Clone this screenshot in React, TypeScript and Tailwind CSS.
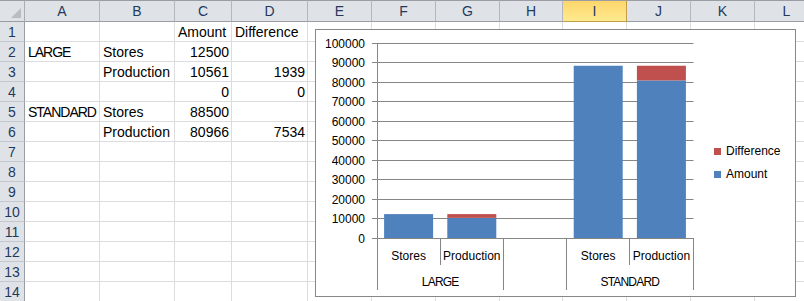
import React from "react";

const colW = [
  "w-[75px]",
  "w-[75px]",
  "w-[57px]",
  "w-[76px]",
  "w-[64px]",
  "w-[64px]",
  "w-[64px]",
  "w-[63px]",
  "w-[64px]",
  "w-[64px]",
  "w-[64px]",
  "w-[64px]",
];
const letters = ["A", "B", "C", "D", "E", "F", "G", "H", "I", "J", "K", "L"];

type Cell = { t: string; r?: boolean; caps?: boolean };
const data: Record<number, Record<number, Cell>> = {
  1: { 2: { t: "Amount" }, 3: { t: "Difference" } },
  2: { 0: { t: "LARGE", caps: true }, 1: { t: "Stores" }, 2: { t: "12500", r: true } },
  3: { 1: { t: "Production" }, 2: { t: "10561", r: true }, 3: { t: "1939", r: true } },
  4: { 2: { t: "0", r: true }, 3: { t: "0", r: true } },
  5: { 0: { t: "STANDARD", caps: true }, 1: { t: "Stores" }, 2: { t: "88500", r: true } },
  6: { 1: { t: "Production" }, 2: { t: "80966", r: true }, 3: { t: "7534", r: true } },
};

const rows = Array.from({ length: 14 }, (_, i) => i + 1);

const Y0 = 238.5;
const UNIT = 19.52;
const yv = (v: number) => Y0 - (v / 10000) * UNIT;
const slotX = (i: number) => 377 + i * 63.2;
const BW = 49;

function Chart() {
  const grid = Array.from({ length: 11 }, (_, i) => i);
  const bars = [
    { slot: 0, amount: 12500, diff: 0 },
    { slot: 1, amount: 10561, diff: 1939 },
    { slot: 3, amount: 88500, diff: 0 },
    { slot: 4, amount: 80966, diff: 7534 },
  ];
  const font = "'Liberation Sans', Arial, sans-serif";
  return (
    <svg
      className="absolute left-[315px] top-[29px]"
      width={482}
      height={269}
      viewBox="315 29 482 269"
      style={{ fontFamily: font }}
    >
      <rect x={315.5} y={29.5} width={480} height={267} fill="#ffffff" stroke="#878787" strokeWidth={1} />
      {grid.map((i) => {
        const y = Math.floor(Y0 - i * UNIT) + 0.5;
        return (
          <g key={i}>
            <line x1={372} x2={693.5} y1={y} y2={y} stroke="#868686" strokeWidth={1} />
            <text x={365} y={y + 4.5} fontSize={12} textAnchor="end" fill="#000">
              {i * 10000}
            </text>
          </g>
        );
      })}
      {bars.map((b) => {
        const cx = slotX(b.slot) + 31.6;
        const x = cx - BW / 2;
        const ya = yv(b.amount);
        const yd = yv(b.amount + b.diff);
        return (
          <g key={b.slot}>
            <rect x={x} y={ya} width={BW} height={Y0 - ya} fill="#4f81bd" />
            {b.diff > 0 && <rect x={x} y={yd} width={BW} height={ya - yd} fill="#c0504d" />}
          </g>
        );
      })}
      <line x1={377.5} x2={377.5} y1={43} y2={290} stroke="#868686" strokeWidth={1} />
      <line x1={372} x2={693.5} y1={238.5} y2={238.5} stroke="#868686" strokeWidth={1} />
      {[1, 4].map((i) => {
        const x = Math.floor(slotX(i)) + 0.5;
        return <line key={i} x1={x} x2={x} y1={238} y2={265} stroke="#868686" strokeWidth={1} />;
      })}
      {[2, 3, 5].map((i) => {
        const x = Math.floor(slotX(i)) + 0.5;
        return <line key={i} x1={x} x2={x} y1={238} y2={290} stroke="#868686" strokeWidth={1} />;
      })}
      {[
        { s: 0, t: "Stores" },
        { s: 1, t: "Production" },
        { s: 3, t: "Stores" },
        { s: 4, t: "Production" },
      ].map((c) => (
        <text key={c.s} x={slotX(c.s) + 31.6} y={260} fontSize={12} textAnchor="middle" fill="#000">
          {c.t}
        </text>
      ))}
      <text x={(377 + slotX(2)) / 2} y={286} fontSize={12} textAnchor="middle" fill="#000" letterSpacing={-0.8}>
        LARGE
      </text>
      <text x={(slotX(3) + slotX(5)) / 2} y={286} fontSize={12} textAnchor="middle" fill="#000" letterSpacing={-0.8}>
        STANDARD
      </text>
      <rect x={714} y={148} width={7} height={7} fill="#c0504d" />
      <text x={726} y={155} fontSize={12} fill="#000">
        Difference
      </text>
      <rect x={714} y={171} width={7} height={7} fill="#4f81bd" />
      <text x={726} y={178} fontSize={12} fill="#000">
        Amount
      </text>
    </svg>
  );
}

export default function App() {
  return (
    <div className="relative w-[804px] h-[301px] overflow-hidden bg-white font-['Liberation_Sans',Arial,sans-serif] text-[14px] text-black">
      <div className="flex w-max flex-col">
        {/* header row */}
        <div className="flex h-[22px]">
          <div className="relative h-[22px] w-[25px] shrink-0 border-y border-r border-y-[#9a9ea4] border-r-[#a9aeb4] bg-[#dfe3e8]">
            <svg className="absolute left-0 top-0" width={24} height={20}>
              <polygon points="21,7 21,17 11,17" fill="#b9bcc0" />
            </svg>
          </div>
          {letters.map((l, i) => {
            const sel = l === "I";
            return (
              <div
                key={l}
                className={
                  sel
                    ? `${colW[i]} flex h-[22px] shrink-0 items-center justify-center border-y border-r border-y-[#c39d48] border-r-[#c39d48] border-t-[#9a9ea4] bg-gradient-to-b from-[#fdd66a] to-[#ffea90] leading-[16px] text-[#1f3a5c]`
                    : `${colW[i]} flex h-[22px] shrink-0 items-center justify-center border-y border-r border-y-[#9a9ea4] border-r-[#b3b8be] bg-[#dfe3e8] leading-[16px] text-[#1f3a5c]`
                }
              >
                {l}
              </div>
            );
          })}
        </div>
        {rows.map((r) => (
          <div key={r} className="flex h-[20px]">
            <div className="flex h-[20px] w-[25px] shrink-0 items-end justify-center border-b border-r border-b-[#c3c8ce] border-r-[#9a9ea4] bg-[#dfe3e8] pb-[1px] leading-[16px] text-[#1f3a5c]">
              {r}
            </div>
            {letters.map((l, i) => {
              const c = data[r]?.[i];
              return (
                <div
                  key={l}
                  className={`${colW[i]} flex h-[20px] shrink-0 items-end overflow-hidden whitespace-nowrap border-b border-r border-[#dadcdd] pb-[1px] leading-[16px] ${
                    c?.r ? "justify-end pr-[2px]" : "justify-start pl-[3px]"
                  }`}
                >
                  {c ? <span className={c.caps ? "tracking-[-1px]" : ""}>{c.t}</span> : null}
                </div>
              );
            })}
          </div>
        ))}
      </div>
      <Chart />
    </div>
  );
}
